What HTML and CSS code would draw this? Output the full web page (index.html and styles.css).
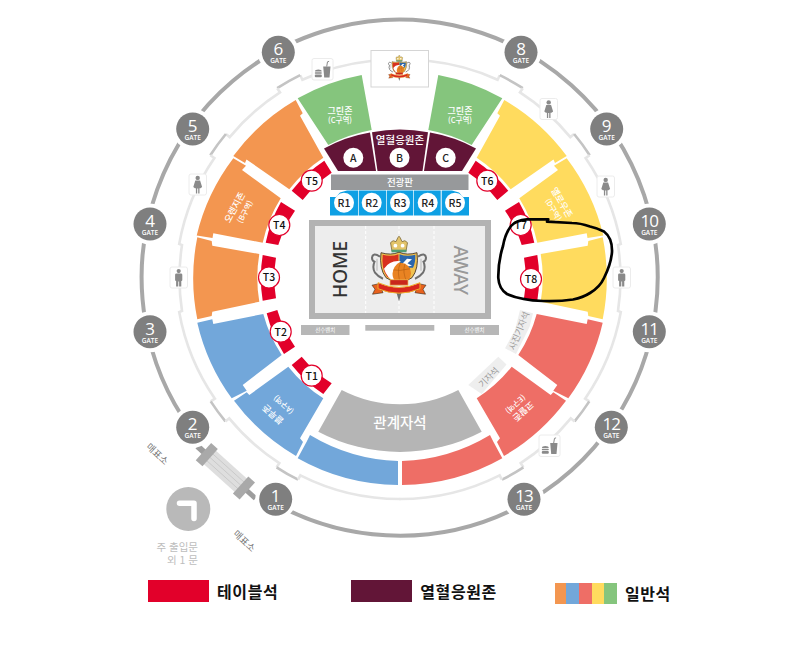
FILE: index.html
```html
<!DOCTYPE html>
<html lang="ko">
<head>
<meta charset="utf-8">
<title>좌석 배치도</title>
<link rel="stylesheet" href="styles.css">
</head>
<body>
<main class="page">
<svg class="map" viewBox="0 0 800 575" width="800" height="575" xmlns="http://www.w3.org/2000/svg">
  <defs>
    <path id="s-green" d="M297.7 98.3A207 207 0 0 1 361.7 75L371.7 130A151 151 0 0 0 328.3 145Z"/>
    <path id="s-top" d="M233.3 156A207 207 0 0 1 295.7 100L302.7 113.3L300 115.7L323.3 157.7A142 142 0 0 0 289.3 189.3L246.5 159.5L245 163Z"/>
    <path id="s-mid" d="M233.3 158.3L246 165.7L242 170L280.7 198.3A142 142 0 0 0 262.7 242.7L213.3 233.3L212.5 238L196.7 235.5A207 207 0 0 1 233.3 158.3Z"/>
    <path id="s-low" d="M197.3 237.3L211.7 241L212.3 245.7L259.3 254A142 142 0 0 0 259.3 301.7L212.3 311.7L211.7 316L197.3 319.3A207 207 0 0 1 197.3 237.3Z"/>
    <path id="s-b1" d="M197.3 322.7L212.3 319.3L213.3 324L263.3 314A142 142 0 0 0 281.7 355L242.7 385L246.7 390.7L231.7 398.3A207 207 0 0 1 197.3 322.7Z"/>
    <path id="s-b2" d="M234 400.7L246.7 392.3L249.3 395L288.3 366.7A142 142 0 0 0 323.3 398.3L300 438.3L303 442L296 456A207 207 0 0 1 234 400.7Z"/>
    <path id="s-b3" d="M297.7 458.3L306.5 442L310 435A182 182 0 0 0 398 461L398 485A207 207 0 0 1 297.7 458.3Z"/>
    <path id="s-a" d="M324 148.5A147 147 0 0 1 370 132.5L376 171L338 171Z"/>
    <g id="tables-upper">
      <path d="M291.7 190.7A139 139 0 0 1 324.3 160.7L331.7 172.7A125 125 0 0 0 302.7 200Z"/>
      <path d="M281 202A139 139 0 0 0 265.7 242.7L278.3 245A125 125 0 0 1 295 210.7Z"/>
      <path d="M262.7 255A139 139 0 0 0 262.7 300.7L276 298.3A125 125 0 0 1 276 257.7Z"/>
    </g>
    <g id="tables-lower">
      <path d="M266.7 313.3A139 139 0 0 0 284 354L295 346.7A125 125 0 0 1 277.3 310Z"/>
      <path d="M291.7 365A139 139 0 0 0 323.3 394L331.7 383.3A125 125 0 0 1 301.7 356.7Z"/>
    </g>
    <g id="ring-half">
      <path class="ring-light" d="M371 61A221 221 0 0 0 302.4 79.7L300.2 75.2"/>
      <path class="ring-dark" d="M300.2 75.2A226 226 0 0 0 277.2 88.2"/>
      <path class="ring-light" d="M277.2 88.2L280 92.4A221 221 0 0 0 229.7 137.1L225.9 134"/>
      <path class="ring-dark" d="M225.9 134A226 226 0 0 0 210.3 155.2"/>
      <path class="ring-light" d="M210.3 155.2L214.4 158A221 221 0 0 0 179.2 244L182 245A218 218 0 0 0 182 311L179.2 312A221 221 0 0 0 214.9 398.7L210.7 401.4"/>
      <path class="ring-dark" d="M210.7 401.4A226 226 0 0 0 225.4 421.4"/>
      <path class="ring-light" d="M225.4 421.4L229.2 418.3A221 221 0 0 0 279.3 463.1L276.6 467.3"/>
      <path class="ring-dark" d="M276.6 467.3A226 226 0 0 0 298.1 479.7"/>
      <path class="ring-light" d="M298.1 479.7L300.4 475.3A221 221 0 0 0 400.5 499"/>
    </g>
    <g id="food">
      <rect class="icon-box" x="0.5" y="0.5" width="21" height="21.5" rx="2"/>
      <path class="icon" d="M3.5 13.5Q3.5 11.6 6.8 11.6Q10.2 11.6 10.2 13.5Z"/>
      <rect class="icon" x="3.3" y="14.3" width="7" height="1.5" rx="0.7"/>
      <rect class="icon" x="3.3" y="16.6" width="7" height="2.6" rx="1"/>
      <path class="icon" d="M11.7 8.5H19L18 19.4H12.7Z"/>
      <path class="icon-line" d="M15.2 8.5L16 3.8L17.6 3.4"/>
    </g>
    <g id="man">
      <rect class="icon-box" x="0.5" y="0.5" width="17.5" height="21" rx="2"/>
      <circle class="icon" cx="9.2" cy="4.6" r="2.1"/>
      <path class="icon" d="M5.6 8.2Q5.6 7 7 7H11.4Q12.8 7 12.8 8.2V13.4Q12.8 14.4 11.8 14.4V20H9.6V15H8.8V20H6.6V14.4Q5.6 14.4 5.6 13.4Z"/>
    </g>
    <g id="woman">
      <rect class="icon-box" x="0.5" y="0.5" width="17.5" height="21" rx="2"/>
      <circle class="icon" cx="9.2" cy="4.4" r="2.2"/>
      <path class="icon" d="M6.8 7H11.6L13.6 13.4L12 14.8H11V20H9.7V15H8.7V20H7.4V14.8H6.4L4.8 13.4Z"/>
    </g>
    <g id="crest">
      <path class="crest-scroll" d="M-19-12Q-26-17-27-11Q-27-8-24.5-7Q-27-1-24 4Q-21 8-16 10"/>
      <path class="crest-scroll" d="M19-12Q26-17 27-11Q27-8 24.5-7Q27-1 24 4Q21 8 16 10"/>
      <path class="crest-scroll-thin" d="M-22-10V2M22-10V2"/>
      <path class="crest-point" d="M-2.5 24L0 32.5L2.5 24Z"/>
      <path class="crest-gold" d="M-7-17.5L-8.5-26Q-6-29.5-3-27Q-1-32 0-32.5Q1-32 3-27Q6-29.5 8.5-26L7-17.5Z"/>
      <circle class="crest-white" cx="-3.6" cy="-23" r="1.9"/>
      <circle class="crest-white" cx="3.6" cy="-23" r="1.9"/>
      <rect class="crest-green" x="-7.5" y="-19" width="15" height="2.6"/>
      <path class="crest-edge" d="M-18-16Q-8-13 0-16.5Q8-13 18-16Q20 0 13 9L0 16L-13 9Q-20 0-18-16Z"/>
      <path class="crest-red" d="M-16.3-14Q-8-11.5-0.5-14.5V14L-12 8Q-17.8 0-16.3-14Z"/>
      <path class="crest-blue" d="M0.5-14.5Q8-11.5 16.3-14Q16.6-6 14-1H0.5Z"/>
      <path class="crest-white" d="M1.5-3L8-10L13-9.5L8.5-5.5L13-3L6-2Z"/>
      <circle class="crest-orange" cx="1.5" cy="4.5" r="10.5"/>
      <path class="crest-ball" d="M-8 1Q1 3 11 0M1.5-6Q-3 4 2 15M6-5Q3 4 8 13"/>
      <path class="crest-white" d="M-15 0Q-9-9 2-7.5Q-6-3-6.5 5Q-6.5 10-3 13.5Q-12 10-15 0Z"/>
      <path class="crest-plate" d="M-9 11H9V16.5H-9Z"/>
      <path class="crest-tail" d="M-20 15L-27 16.5L-24 20.5L-26.5 25.5L-16 24Z"/>
      <path class="crest-tail" d="M20 15L27 16.5L24 20.5L26.5 25.5L16 24Z"/>
      <path class="crest-band" d="M-21 14Q0 23.5 21 14L21 20Q0 29-21 20Z"/>
    </g>
  </defs>

  <path class="ring-outer" d="M274 503A258 258 0 1 0 190.5 428.7"/>
  <use href="#ring-half"/>
  <use href="#ring-half" transform="matrix(-1 0 0 1 800 0)"/>

  <rect class="logo-box" x="371" y="50.5" width="57.5" height="36.5"/>
  <use href="#crest" transform="translate(399.3 68) scale(0.4)"/>

  <use href="#food" x="311.5" y="58"/>
  <use href="#food" x="538.5" y="434.5"/>
  <use href="#woman" x="188.5" y="173.5"/>
  <use href="#woman" x="539.5" y="98"/>
  <use href="#woman" x="596.5" y="175.5"/>
  <use href="#man" x="169.5" y="266.5"/>
  <use href="#man" x="612.5" y="266.5"/>

  <g class="c-green">
    <use href="#s-green"/>
    <use href="#s-green" transform="matrix(-1 0 0 1 800 0)"/>
  </g>
  <g class="c-orange">
    <use href="#s-top"/><use href="#s-mid"/><use href="#s-low"/>
  </g>
  <g class="c-yellow" transform="matrix(-1 0 0 1 800 0)">
    <use href="#s-top"/><use href="#s-mid"/><use href="#s-low"/>
  </g>
  <g class="c-blue">
    <use href="#s-b1"/><use href="#s-b2"/><use href="#s-b3"/>
  </g>
  <g class="c-red" transform="matrix(-1 0 0 1 800 0)">
    <use href="#s-b1"/><use href="#s-b2"/><use href="#s-b3"/>
  </g>
  <path class="c-gray" d="M341.7 390A126 126 0 0 0 458.3 390L481.7 431.7A175 175 0 0 1 318.3 431.7Z"/>
  <text class="t-center t-stand" x="400" y="428">관계자석</text>

  <g class="c-maroon">
    <use href="#s-a"/>
    <use href="#s-a" transform="matrix(-1 0 0 1 800 0)"/>
    <path d="M372 132.3A147 147 0 0 1 428 132.3L422.5 171L377.5 171Z"/>
  </g>
  <text class="t-center t-cheer" x="400" y="143.5">열혈응원존</text>
  <circle class="dot" cx="353.3" cy="157.7" r="10"/>
  <circle class="dot" cx="399.5" cy="157.7" r="10"/>
  <circle class="dot" cx="445.7" cy="157.7" r="10"/>
  <text class="t-center t-dot" x="353.3" y="161.5">A</text>
  <text class="t-center t-dot" x="399.5" y="161.5">B</text>
  <text class="t-center t-dot" x="445.7" y="161.5">C</text>

  <rect class="c-board" x="331" y="174.5" width="137.5" height="15.5"/>
  <text class="t-center t-board" x="400" y="185.5">전광판</text>

  <path class="c-sky" d="M330 197L336 197L340 192.5L347 190.5H358.3V215.5H330Z"/>
  <rect class="c-sky" x="359" y="190.5" width="27" height="25"/>
  <rect class="c-sky" x="386.7" y="190.5" width="26.6" height="25"/>
  <rect class="c-sky" x="414" y="190.5" width="26.7" height="25"/>
  <path class="c-sky" d="M469 197L463 197L459 192.5L452 190.5H441.7V215.5H469Z"/>
  <circle class="dot" cx="344" cy="202.7" r="10"/>
  <circle class="dot" cx="371.7" cy="202.7" r="10"/>
  <circle class="dot" cx="400" cy="202.7" r="10"/>
  <circle class="dot" cx="427.7" cy="202.7" r="10"/>
  <circle class="dot" cx="455" cy="202.7" r="10"/>
  <text class="t-center t-r" x="344" y="206.7">R1</text>
  <text class="t-center t-r" x="371.7" y="206.7">R2</text>
  <text class="t-center t-r" x="400" y="206.7">R3</text>
  <text class="t-center t-r" x="427.7" y="206.7">R4</text>
  <text class="t-center t-r" x="455" y="206.7">R5</text>

  <rect class="court" x="312" y="223" width="176" height="93"/>
  <path class="court-line" d="M365.7 226V313M434 226V313M399 226V313"/>
  <text class="t-center t-home" transform="translate(347 269.5) rotate(-90)">HOME</text>
  <text class="t-center t-away" transform="translate(454 270) rotate(90)">AWAY</text>
  <use href="#crest" transform="translate(399 268.7)"/>

  <rect class="bench" x="301" y="325" width="48.5" height="10"/>
  <rect class="bench" x="365.3" y="325" width="69" height="5.7"/>
  <rect class="bench" x="450" y="325" width="49" height="10"/>
  <text class="t-center t-bench" x="325.3" y="332.3">선수벤치</text>
  <text class="t-center t-bench" x="474.5" y="332.3">선수벤치</text>

  <g class="c-table">
    <use href="#tables-upper"/>
    <use href="#tables-lower"/>
    <use href="#tables-upper" transform="matrix(-1 0 0 1 800 0)"/>
  </g>
  <circle class="t-dot-ring" cx="311.7" cy="180.7" r="10.5"/>
  <circle class="t-dot-ring" cx="279.3" cy="225" r="10.5"/>
  <circle class="t-dot-ring" cx="269" cy="277.5" r="10.5"/>
  <circle class="t-dot-ring" cx="280.7" cy="331.7" r="10.5"/>
  <circle class="t-dot-ring" cx="311.7" cy="375.7" r="10.5"/>
  <circle class="t-dot-ring" cx="487.3" cy="180.7" r="10.5"/>
  <circle class="t-dot-ring" cx="520.7" cy="225" r="10.5"/>
  <circle class="t-dot-ring" cx="531" cy="279" r="10.5"/>
  <text class="t-center t-table" x="311.7" y="184.6">T5</text>
  <text class="t-center t-table" x="279.3" y="228.9">T4</text>
  <text class="t-center t-table" x="269" y="281.4">T3</text>
  <text class="t-center t-table" x="280.7" y="335.6">T2</text>
  <text class="t-center t-table" x="311.7" y="379.6">T1</text>
  <text class="t-center t-table" x="487.3" y="184.6">T6</text>
  <text class="t-center t-table" x="520.7" y="228.9">T7</text>
  <text class="t-center t-table" x="531" y="282.9">T8</text>

  <text class="t-center t-zone" x="340" y="113.5">그린존</text>
  <text class="t-center t-sub" x="340" y="123.3">(C구역)</text>
  <text class="t-center t-zone" x="460" y="113.5">그린존</text>
  <text class="t-center t-sub" x="460" y="123.3">(C구역)</text>
  <text class="t-center t-zone" transform="translate(237.5 209) rotate(-62)">오렌지존</text>
  <text class="t-center t-sub" transform="translate(247.5 213) rotate(-62)">(B구역)</text>
  <text class="t-center t-zone" transform="translate(559 204) rotate(60)">옐로우존</text>
  <text class="t-center t-sub" transform="translate(551 211) rotate(60)">(D구역)</text>
  <text class="t-center t-zone" transform="translate(275 412) rotate(222)">블루존</text>
  <text class="t-center t-sub" transform="translate(285.5 402.5) rotate(222)">(A구역)</text>
  <text class="t-center t-zone" transform="translate(521 409) rotate(138)">코랄존</text>
  <text class="t-center t-sub" transform="translate(513.5 402) rotate(138)">(E구역)</text>

  <path class="press" d="M520 310L533 313.3L529.5 327L516 354L505 348.3L515 330Z"/>
  <text class="t-center t-press" transform="translate(522 332) rotate(-68)">사진기자석</text>
  <path class="press" d="M468.3 385L498.3 356.7L506.5 364.5L481.7 394Z"/>
  <text class="t-center t-press" transform="translate(491 379.5) rotate(-45)">기자석</text>

  <g class="entry" transform="translate(225 471) rotate(42)">
    <rect class="entry-stub" x="-37" y="-3" width="9" height="6"/>
    <rect class="entry-stub" x="29" y="-2.5" width="12" height="5"/>
    <rect class="entry-deck" x="-21" y="-9" width="43" height="18"/>
    <path class="entry-rail" d="M-21-4.5H22M-21 0H22M-21 4.5H22"/>
    <rect class="entry-block" x="-29" y="-11.5" width="9" height="23"/>
    <rect class="entry-block" x="21" y="-11.5" width="9" height="23"/>
  </g>
  <circle class="main-gate" cx="188.3" cy="509" r="22"/>
  <path class="main-arrow" d="M179.5 503.3H194V518.5"/>
  <text class="t-end t-main" x="198" y="550.5">주 출입문</text>
  <text class="t-end t-main" x="198" y="563.5">외 1 문</text>
  <text class="t-center t-ticket" transform="translate(155 456.5) rotate(43)">매표소</text>
  <text class="t-center t-ticket" transform="translate(242 543.5) rotate(43)">매표소</text>

  <g class="gate" transform="translate(278.3 52.3)"><circle class="halo" r="20.5"/><circle class="disc" r="16.5"/><text class="t-center t-num" y="3">6</text><text class="t-center t-gate" y="11.2">GATE</text></g>
  <g class="gate" transform="translate(521 52.3)"><circle class="halo" r="20.5"/><circle class="disc" r="16.5"/><text class="t-center t-num" y="3">8</text><text class="t-center t-gate" y="11.2">GATE</text></g>
  <g class="gate" transform="translate(192.7 129)"><circle class="halo" r="20.5"/><circle class="disc" r="16.5"/><text class="t-center t-num" y="3">5</text><text class="t-center t-gate" y="11.2">GATE</text></g>
  <g class="gate" transform="translate(606.7 129)"><circle class="halo" r="20.5"/><circle class="disc" r="16.5"/><text class="t-center t-num" y="3">9</text><text class="t-center t-gate" y="11.2">GATE</text></g>
  <g class="gate" transform="translate(150 224)"><circle class="halo" r="20.5"/><circle class="disc" r="16.5"/><text class="t-center t-num" y="3">4</text><text class="t-center t-gate" y="11.2">GATE</text></g>
  <g class="gate" transform="translate(649.3 224)"><circle class="halo" r="20.5"/><circle class="disc" r="16.5"/><text class="t-center t-num t-num-wide" y="3">10</text><text class="t-center t-gate" y="11.2">GATE</text></g>
  <g class="gate" transform="translate(150 331.7)"><circle class="halo" r="20.5"/><circle class="disc" r="16.5"/><text class="t-center t-num" y="3">3</text><text class="t-center t-gate" y="11.2">GATE</text></g>
  <g class="gate" transform="translate(649.3 331.7)"><circle class="halo" r="20.5"/><circle class="disc" r="16.5"/><text class="t-center t-num t-num-wide" y="3">11</text><text class="t-center t-gate" y="11.2">GATE</text></g>
  <g class="gate" transform="translate(192.7 427.3)"><circle class="halo" r="20.5"/><circle class="disc" r="16.5"/><text class="t-center t-num" y="3">2</text><text class="t-center t-gate" y="11.2">GATE</text></g>
  <g class="gate" transform="translate(611.3 427.3)"><circle class="halo" r="20.5"/><circle class="disc" r="16.5"/><text class="t-center t-num t-num-wide" y="3">12</text><text class="t-center t-gate" y="11.2">GATE</text></g>
  <g class="gate" transform="translate(275.7 499.3)"><circle class="halo" r="20.5"/><circle class="disc" r="16.5"/><text class="t-center t-num" y="3">1</text><text class="t-center t-gate" y="11.2">GATE</text></g>
  <g class="gate" transform="translate(524 499.3)"><circle class="halo" r="20.5"/><circle class="disc" r="16.5"/><text class="t-center t-num t-num-wide" y="3">13</text><text class="t-center t-gate" y="11.2">GATE</text></g>

  <path class="scribble" d="M548.3 219.3L527 219.3Q516 220 511 226Q505 234 503 246Q498 262 498.3 278Q499 289 507 294Q520 300 543 301Q560 301.5 573 299.5Q583 297.5 590 293Q600 287 604 278Q611 264 612 252Q612.5 238 604 231.5Q597 228 590 226.5Q580 223 572 223L547 221.7"/>
</svg>

<section class="legend">
  <div class="legend-item legend-table">
    <span class="swatch swatch-table"></span>
    <span class="legend-label">테이블석</span>
  </div>
  <div class="legend-item legend-cheer">
    <span class="swatch swatch-cheer"></span>
    <span class="legend-label">열혈응원존</span>
  </div>
  <div class="legend-item legend-general">
    <span class="multi">
      <span class="seg seg-orange"></span>
      <span class="seg seg-blue"></span>
      <span class="seg seg-red"></span>
      <span class="seg seg-yellow"></span>
      <span class="seg seg-green"></span>
    </span>
    <span class="legend-label">일반석</span>
  </div>
</section>
</main>
</body>
</html>
```

FILE: styles.css
```css
* { box-sizing: border-box; }
html, body { margin: 0; padding: 0; background: #fff; }
body { font-family: "Noto Sans CJK KR", "Noto Sans", sans-serif; }
.page { width: 800px; height: 652px; overflow: hidden; }
.map { display: block; }
.map text { font-family: "Noto Sans CJK KR", "Noto Sans", sans-serif; }

.ring-outer { fill: none; stroke: #a8a8a8; stroke-width: 4; }
.ring-light { fill: none; stroke: #e6e6e6; stroke-width: 2.6; }
.ring-dark { fill: none; stroke: #c4c4c4; stroke-width: 2.6; }

.logo-box { fill: #fff; stroke: #d5d5d5; stroke-width: 1; }
.icon-box { fill: #fff; stroke: #ececec; stroke-width: 1; }
.icon { fill: #8a8a8a; }
.icon-line { fill: none; stroke: #8a8a8a; stroke-width: 1; }

.c-green { fill: #85c57d; }
.c-orange { fill: #f39650; }
.c-yellow { fill: #ffdb5e; }
.c-blue { fill: #72a7da; }
.c-red { fill: #ee6e66; }
.c-gray { fill: #b5b5b5; }
.c-maroon { fill: #621537; }
.c-board { fill: #97999b; }
.c-sky { fill: #0ea0e4; }
.c-table { fill: #e2002a; }

.dot { fill: #fff; }
.t-dot-ring { fill: #fff; stroke: #e2002a; stroke-width: 1.2; }

.t-center { text-anchor: middle; }
.t-end { text-anchor: end; }
.t-stand { fill: #fff; font-size: 14.5px; font-weight: 500; }
.t-cheer { fill: #fff; font-size: 10.5px; font-weight: 500; }
.t-dot { fill: #222; font-size: 10.5px; font-weight: 500; }
.t-board { fill: #fff; font-size: 9.5px; font-weight: 500; }
.t-r { fill: #222; font-size: 10.5px; font-weight: 500; }
.t-table { fill: #111; font-size: 10.5px; font-weight: 500; }
.t-zone { fill: #fff; font-size: 9px; font-weight: 500; }
.t-sub { fill: #fff; font-size: 7.5px; font-weight: 500; }
.t-press { fill: #999; font-size: 8.8px; }
.t-bench { fill: #fff; font-size: 5.5px; }
.t-main { fill: #bdbdbd; font-size: 10.5px; }
.t-ticket { fill: #777; font-size: 9.5px; }
.map .t-home { fill: #333; font-size: 19px; font-weight: 500; font-family: "Noto Sans", sans-serif; }
.map .t-away { fill: #999; font-size: 19px; font-weight: 500; letter-spacing: -0.5px; font-family: "Noto Sans", sans-serif; }

.court { fill: #ededed; stroke: #b3b3b3; stroke-width: 6; }
.court-line { fill: none; stroke: #fff; stroke-width: 1; stroke-dasharray: 3 2; }
.bench { fill: #b7b7b7; }
.press { fill: #eeeeee; }

.entry-stub { fill: #9d9d9d; }
.entry-block { fill: #a9a9a9; }
.entry-deck { fill: #dedede; }
.entry-rail { fill: none; stroke: #bdbdbd; stroke-width: 0.6; }
.main-gate { fill: #b9b9b9; }
.main-arrow { fill: none; stroke: #fff; stroke-width: 5.5; stroke-linecap: round; stroke-linejoin: round; }

.halo { fill: #fff; }
.disc { fill: #7f7f7f; }
.map .t-num { fill: #fff; font-size: 17px; font-family: "Open Sans", sans-serif; }
.map .t-num-wide { letter-spacing: -1px; }
.map .t-gate { fill: #fff; font-size: 6.5px; font-weight: 600; font-family: "Open Sans", sans-serif; }

.scribble { fill: none; stroke: #000; stroke-width: 2.7; stroke-linecap: round; stroke-linejoin: round; }

.crest-scroll { fill: none; stroke: #6f6f6f; stroke-width: 2; }
.crest-scroll-thin { fill: none; stroke: #c9c9c9; stroke-width: 1.5; }
.crest-point { fill: #6f6f6f; }
.crest-gold { fill: #e3c46a; stroke: #7d6a3a; stroke-width: 0.8; }
.crest-white { fill: #fff; }
.crest-green { fill: #4f9c74; }
.crest-edge { fill: #f0c14f; stroke: #4a3a2a; stroke-width: 0.9; }
.crest-red { fill: #d8301f; }
.crest-blue { fill: #2a66ad; }
.crest-orange { fill: #e98322; }
.crest-ball { fill: none; stroke: #a9560f; stroke-width: 0.5; }
.crest-plate { fill: #c9261c; stroke: #f0c14f; stroke-width: 0.7; }
.crest-tail { fill: #e8611d; stroke: #3a2a1a; stroke-width: 0.6; }
.crest-band { fill: #d8281e; stroke: #f0b02c; stroke-width: 1; }

.legend { display: flex; align-items: flex-start; padding: 5px 0 0 148px; }
.legend-item { display: flex; align-items: center; }
.legend-cheer { margin-left: 73px; }
.legend-general { margin-left: 58px; margin-top: 2px; }
.swatch { display: block; width: 61px; height: 22px; }
.swatch-table { background: #e2002a; }
.swatch-cheer { background: #621537; }
.legend-label { margin-left: 8px; font-size: 16px; line-height: 22px; font-weight: 700; letter-spacing: 0.6px; color: #111; }
.multi { display: flex; width: 62px; height: 21px; }
.seg { display: block; height: 100%; }
.seg-orange { width: 11px; background: #f39650; }
.seg-blue { width: 13px; background: #72a7da; }
.seg-red { width: 13px; background: #ee6e66; }
.seg-yellow { width: 12px; background: #ffdb5e; }
.seg-green { width: 13px; background: #85c57d; }
```
